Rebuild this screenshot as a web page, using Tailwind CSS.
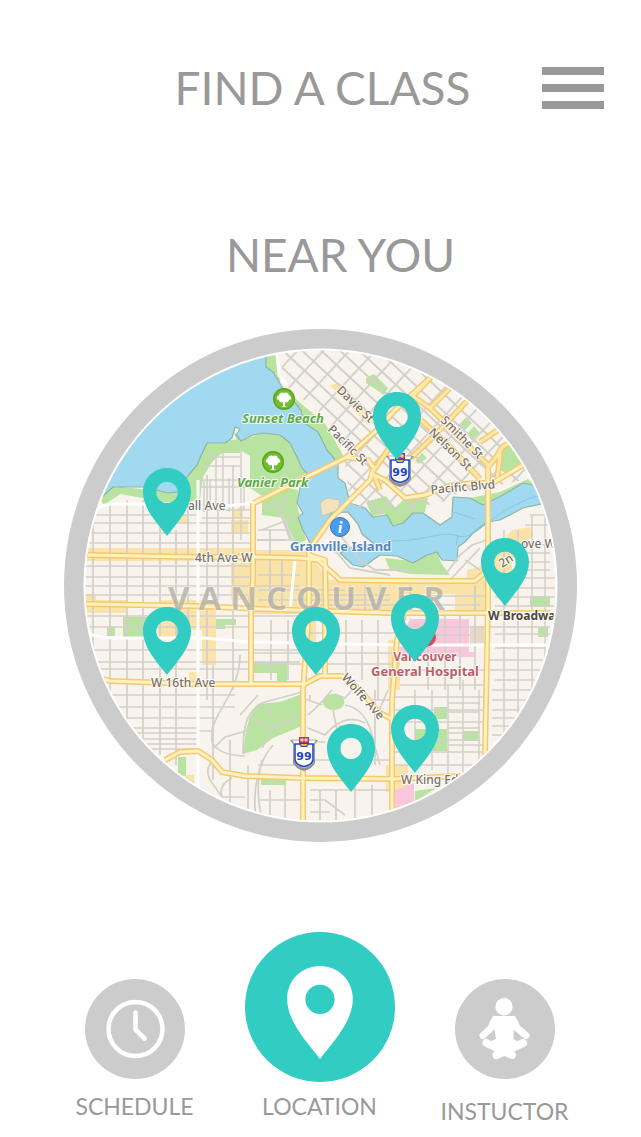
<!DOCTYPE html>
<html lang="en">
<head>
<meta charset="utf-8">
<meta name="viewport" content="width=device-width, initial-scale=1">
<title>Find a class</title>
<script src="https://cdn.jsdelivr.net/npm/@tailwindcss/browser@4"></script>
</head>
<body class="min-h-screen bg-white font-['Lato',sans-serif] text-[#999999]">
<header class="grid grid-cols-[1fr_auto_1fr] items-center pt-[60px] pr-[37px] pl-[41px]">
  <h1 class="col-start-2 text-[46px] leading-14">FIND A CLASS</h1>
  <button type="button" aria-label="Menu" class="flex cursor-pointer flex-col gap-[9px] justify-self-end">
    <span class="block h-[8px] w-[62px] bg-[#999999]"></span>
    <span class="block h-[8px] w-[62px] bg-[#999999]"></span>
    <span class="block h-[8px] w-[62px] bg-[#999999]"></span>
  </button>
</header>

<main>
  <h2 class="pt-[111px] pl-10 text-center text-[46px] leading-14">NEAR YOU</h2>

  <section aria-label="Classes near you" class="px-16 pt-[46px]">
    <svg viewBox="64 329 513 513" class="block w-full">
      <defs>
        <clipPath id="disc"><circle cx="320.5" cy="585.5" r="235"/></clipPath>
        <clipPath id="downtown"><path d="M278 340L284 384L304 400L328 418L344 455L350 503L372 513L395 515L420 507L450 500L452 495L523 480L560 470V340Z"/></clipPath>
        <pattern id="blocks" width="19" height="13" patternUnits="userSpaceOnUse" patternTransform="rotate(43 380 400)">
          <path d="M0 1H19M1 0V13" stroke="#d3cfc9" stroke-width="1.800" fill="none"/>
        </pattern>
        <path id="roads" d="M80 555L195 557H255L300 558L318 560L340 580L420 581H475L488 570M80 604L195 606L260 609L390 613H550M253 503V580L251 600V685M254 503L347 457L377 430L395 410L430 378M303 820V690L309 610V550L330 520L370 480L374 468L368 460L345 457M309 545V555L325 560L326 610M325 610V676M100 678L110 681L200 684H305L320 676H342L360 690L378 712L392 719M165 760L180 752L198 751L212 760L222 772L245 776L300 778L395 779L460 776M392 820V700L397 640L404 615M485 755L488 600V470M370 473L385 480L405 498L425 495L452 485L477 483H493L523 465"/>
        <path id="downtown-roads" d="M374 470L395 440L411 426M480 479L453 450L421 420M410 399L448 360M411 395L430 408L490 467M430 408L450 388M411 458L436 434L468 400M480 442L498 430M488 480V467L497 456L500 450Q506 442 518 442M497 478Q500 462 500 450M372 470L380 490"/>
        <symbol id="pin" viewBox="0 0 48 68">
          <path fill="currentColor" fill-rule="evenodd" d="M24 0C37.500 0 48 10.500 48 24C48 41 33 56 24 68C15 56 0 41 0 24C0 10.500 10.500 0 24 0ZM24 13.700A10.700 10.700 0 1 0 24 35.100A10.700 10.700 0 1 0 24 13.700Z"/>
        </symbol>
        <symbol id="tree" viewBox="0 0 24 24">
          <circle cx="12" cy="12" r="11" fill="#58a618"/>
          <circle cx="12" cy="12" r="9.500" fill="#72bd2c"/>
          <path fill="#fff" d="M11 19V15C9 16 7 15 7 13C4 13 4 9 7 8.500C7 6 10 4.500 12 6C14 4.500 17 6 17 8.500C20 9 20 13 17 13C17 15 15 16 13 15V19L15 20H9Z"/>
        </symbol>
        <symbol id="shield" viewBox="0 0 30 36">
          <path d="M1 4H29L26 8V27Q24 32 15 35Q6 32 4 27V8Z" fill="#8f8f8f"/>
          <path d="M3 4H27L25 8V24Q24 30 15 32Q6 30 5 24V8Z" fill="#fff" stroke="#aaa" stroke-width="1"/>
          <path d="M6 8H24V24Q23 29 15 30.500Q7 29 6 24Z" fill="#fff" stroke="#2449bd" stroke-width="1.600"/>
          <path d="M10 1H20V8L18 11H12L10 8Z" fill="#2449bd"/>
          <path d="M10.500 1.500H19.500V6.500H10.500Z" fill="#e9404a"/>
          <path d="M11 8H19L17 10H13Z" fill="#f7b429"/>
          <path d="M13 2V6M17 2V6M11 4H19" stroke="#fff" stroke-width="0.800"/>
          <text x="15" y="24" text-anchor="middle" class="font-['DejaVu_Sans'] text-[11px] font-bold" fill="#2449bd">99</text>
        </symbol>
      </defs>

      <circle cx="320.500" cy="585.500" r="256.500" fill="#cccccc"/>
      <circle cx="320.500" cy="585.500" r="237" fill="#ffffff"/>

      <g clip-path="url(#disc)">
        <rect x="64" y="329" width="513" height="513" fill="#f8f4ed"/>

        <!-- commercial and hospital areas -->
        <g fill="#fae3a8">
          <path d="M80 548H255V561H80ZM80 594H96V600H126V613H80ZM161 600H216V630H180V638H158V614ZM202 612H216V665H202ZM182 515H187V524H176ZM252 550H305L330 580H467V570L487 565V560L512 530L530 527L533 535L512 560V578H487V615H455V593H400V612L300 614H252V600H231V563H252ZM231 520H248V533H231ZM232 512L243 505V518H232ZM386 765H408V792H386ZM388 640H400V690H388ZM189 672H200V688H189ZM185 775H194V786H185ZM330 385L340 383L378 420L368 425ZM303 620H316V660H303Z"/>
        </g>
        <path d="M330 582H455V594H330Z" fill="#fae3a8"/>
        <path d="M410 619H469V652H474V657H400V640ZM395 790L414 783V820H395Z" fill="#f9c6dc"/>
        <path d="M470 626H484V645H470Z" fill="#e7dac5"/>

        <!-- parks -->
        <g fill="#b9e3a1">
          <path d="M100 499L113 486L168 492L180 490L207 443L240 439V453H222L212 462L203 477L200 499L181 505L120 494L104 505Z"/>
          <path d="M232 427L240 441L263 433L280 435L290 443L307 473L262 496L250 488V456L240 450Z"/>
          <path d="M262 495L283 487L298 490L297 505L306 540L296 545L284 518L262 515Z"/>
          <path d="M266 352H275L281 386L304 406L326 425L343 455L338 464L303 422L282 388L266 368Z"/>
          <path d="M366 378L374 374L388 388L384 395L366 383ZM459 425L466 417L472 423L465 430ZM468 433L474 426L480 433L471 440ZM415 461L422 453L427 458L419 464Z"/>
          <path d="M366 502L386 496L395 508L403 500L428 498L425 512L403 524L391 525L385 514L372 516Z"/>
          <path d="M470 498L500 492L528 479L540 490L480 508Z"/>
          <path d="M385 558L413 561L437 551L441 563L450 575L410 574L390 570ZM404 544H412V557H404Z"/>
          <path d="M123 617H156V638H123ZM107 627H115V636H107ZM216 619H236V625H225V629H216ZM530 596H550V607H530ZM538 627H548V637H538ZM253 662H287V682H277V673H253ZM261 779H286V785H261ZM178 757H186V776H178ZM434 707H447V719H434ZM415 729H447V751H415ZM463 731H479V741H463ZM415 791L436 788L415 802Z"/>
          <path d="M302 694L280 702L258 704L250 716L246 730L243 754L257 750L273 738L302 726Z"/>
          <ellipse cx="333.500" cy="702" rx="11" ry="8"/>
        </g>

        <!-- water -->
        <path fill="#a1d9f1" stroke="#8db5a5" stroke-width="1.200" stroke-linejoin="round" d="M60 520L102 497L113 487H143L156 490L168 493L178 492L187 477L197 465L200 458L207 443H225L232 438L235 427L240 429L236 435L241 441L253 435L263 433L280 435L290 443L297 457L302 468L307 473L300 488L297 503L303 513L298 517L303 530L310 543L316 539L324 524L332 513L348 512L358 524L362 534L374 544L364 545L350 548L340 553L353 565L363 567L380 555L397 556L413 563L427 555L437 552L442 560L457 561L458 547L465 542L473 533L487 522L500 520L523 508L560 500V480L533 485L523 483L503 495L483 505L470 498L453 497L452 517L440 525L433 520L423 513H413L403 523L393 526L387 515L373 517L365 508L350 503L345 483L338 478V463L327 450L318 432L303 422L301 410L282 387L273 372L266 367V330H60Z"/>
        <path d="M320 503L327 498L340 500L338 510L322 516Z" fill="#f3e3bd" stroke="#c4c6b4"/>
        <path d="M390 541C430 541 440 530 458 536S490 510 540 495M458 536L456 545M454 512L475 519" fill="none" stroke="#86c6e8" stroke-width="1"/>

        <!-- downtown blocks -->
        <path clip-path="url(#downtown)" d="M270 340H560V520H270Z" fill="url(#blocks)"/>
        <ellipse cx="511" cy="459" rx="12" ry="15" transform="rotate(30 511 459)" fill="#b9e3a1"/>

        <!-- minor streets -->
        <g fill="none" stroke="#d3cfc9" stroke-width="1.700">
          <path d="M93 510V680M110 505V720M127 500V730M143 500V745M160 500V755M176 530V765M188 500V640M207 475V700M218 510V600M233 465V690M213 665V780"/>
          <path d="M80 515H198M80 523H250M80 533H250M80 543H250M80 566H250M80 577H250M80 586H300M80 595H250M80 616H305M80 627H250M80 650H300M80 662H300M90 669H250M95 695H235M100 707H235M105 718H215M125 728H198M130 733H198M135 739H198M140 744H198M145 749H198"/>
          <path d="M200 466H240M205 457H240M198 480H250M196 487H248M202 510H250M202 518H250M204 480V512M210 480V505M216 455V505M223 452V505M229 478V512M241 450V540M244 480V510" stroke-width="1.500"/>
          <path d="M258 530H290M258 540H295M258 575H300M258 590H345M258 600H390M270 530V610M282 560V610M271 620V680M288 620V680M346 620V682M362 620V680M378 620V700M252 633H400M252 653H400M252 664H400"/>
          <path d="M310 595H390M320 605H480M350 585V612M365 585V612M380 585V612M410 585V615M428 615V690M445 610V690M460 615V690M475 585V690M400 596H485M400 627H485M400 635H470M490 627H550M490 660H550M490 670H550M400 670H485M400 685H485"/>
          <path d="M504 530V740M518 530V725M532 515V700M545 515V680M530 515H550M525 525H550M522 545H550M520 553H550M515 562H550M515 570H550M495 578H555M495 588H555M495 597H555M495 606H555M495 634H550M495 648H545M495 680H535M492 690H535M492 700H530M492 710H525M492 718H515M492 726H510M492 735H505" stroke-width="1.500"/>
          <path d="M415 690V765M432 690V770M448 685V790M463 680V775M479 690V765M395 697H487M395 710H487M448 703H480M448 712H480M395 722H485M448 728H480M415 740H480M395 752H487M448 745H485M395 765H487M448 733H480" stroke-width="1.500"/>
          <path d="M240 655C240 690 215 712 212 730L212 742Q218 755 245 756M214 748L225 737L250 730M211 763Q205 770 210 780L222 797H245M222 797Q218 785 232 778M198 731H212M230 740V820M248 765V820M262 760C256 785 258 800 262 820M273 745C258 762 252 790 256 820"/>
          <path d="M308 715Q320 705 332 690M322 705L300 697M345 705Q365 708 372 735T380 765M333 710L337 730M308 728L325 735Q345 712 365 723M310 742H325M310 760H390M340 725V760M258 765H300M320 790V820M336 790V820M355 785V820M372 785V815M310 800H325L345 815M310 812H330M270 790V815M285 785V820M310 790H390M258 800H300M352 690L345 698L335 694M375 690V765M388 690L375 720M360 700H390M258 695L240 715M310 695V700"/>
          <path d="M243 754C243 730 245 712 262 703T302 692M250 718L272 728L302 716M263 705L275 718M262 748L275 725M268 510L275 502L283 520L290 540M262 530L300 515M257 540H285M285 495L282 515L292 540M340 535L360 560L375 570H410M330 545L350 568L390 575M445 575L460 555L472 545L487 540M450 580L480 548M465 560L480 570" stroke-width="1.800"/>
        </g>
        <!-- light secondary roads -->
        <path fill="none" stroke="#ffffff" stroke-width="3" d="M198 480V790M88 520Q95 504 115 504H188M80 630Q95 638 115 638H205L250 642L395 645H550M225 506L255 503M290 610L295 560M276 345L279 375L287 385"/>
        <!-- arterial roads: casing, then centre -->
        <g fill="none" stroke-linejoin="round">
          <use href="#roads" stroke="#f5c873" stroke-width="6"/>
          <use href="#downtown-roads" stroke="#f5c873" stroke-width="6"/>
          <use href="#roads" stroke="#fff2bd" stroke-width="3"/>
          <use href="#downtown-roads" stroke="#fde9a6" stroke-width="3"/>
        </g>

        <!-- place labels -->
        <text y="610" x="168" class="font-['Open_Sans'] text-[33px] font-bold tracking-[9px]" fill="#b0ada3" fill-opacity="0.75" stroke="#ffffff" stroke-opacity="0.4" stroke-width="2" paint-order="stroke">VANCOUVER</text>
        <g class="font-['Noto_Sans'] text-[12px] font-medium" fill="#77716a" stroke="#ffffff" stroke-width="2" stroke-opacity="0.850" paint-order="stroke" stroke-linejoin="round">
          <text x="188" y="510">all Ave</text>
          <text x="195" y="562">4th Ave W</text>
          <text x="151" y="687">W 16th Ave</text>
          <text x="401" y="784">W King Edw</text>
          <text transform="translate(336 391) rotate(44)">Davie St</text>
          <text transform="translate(327 430) rotate(45)">Pacific St</text>
          <text transform="translate(440 421) rotate(45)">Smithe St</text>
          <text transform="translate(428 433) rotate(44)">Nelson St</text>
          <text transform="translate(431 494) rotate(-5)">Pacific Blvd</text>
          <text transform="translate(341 678) rotate(48)">Wolfe Ave</text>
          <text transform="translate(502 568) rotate(-32)">2n</text>
          <text x="521" y="548">ove W</text>
          <text x="488" y="620" class="font-bold" fill="#4c4842">W Broadway</text>
          <g class="font-bold">
            <g fill="#5fa947" class="text-[13px] italic">
              <text x="242" y="423">Sunset Beach</text>
              <text x="237" y="487">Vanier Park</text>
            </g>
            <text x="290" y="551" class="text-[13px]" fill="#5585bd">Granville Island</text>
            <g fill="#bd5e65" text-anchor="middle">
              <text x="425" y="661">Vancouver</text>
              <text x="425" y="676" class="text-[13px]">General Hospital</text>
            </g>
          </g>
        </g>
        <use href="#tree" x="272" y="387" width="24" height="24"/>
        <use href="#tree" x="261" y="450" width="24" height="24"/>
        <circle cx="340" cy="527" r="9.500" fill="#4a9cf0" stroke="#3476b8"/>
        <text x="340" y="533" text-anchor="middle" class="font-['Liberation_Serif'] text-[17px] font-bold italic" fill="#ffffff">i</text>
        <circle cx="426" cy="637" r="10" fill="#d94b53"/>
        <use href="#shield" x="385" y="452" width="30" height="36"/>
        <use href="#shield" x="289" y="736" width="30" height="36"/>
      </g>

      <g class="text-[#31ccc2]">
        <a href="#class-1" aria-label="Class 1"><use href="#pin" x="373" y="392" width="48" height="68"/></a>
        <a href="#class-2" aria-label="Class 2"><use href="#pin" x="143" y="468" width="48" height="68"/></a>
        <a href="#class-3" aria-label="Class 3"><use href="#pin" x="481" y="538" width="48" height="68"/></a>
        <a href="#class-4" aria-label="Class 4"><use href="#pin" x="391" y="594" width="48" height="68"/></a>
        <a href="#class-5" aria-label="Class 5"><use href="#pin" x="292" y="607" width="48" height="68"/></a>
        <a href="#class-6" aria-label="Class 6"><use href="#pin" x="143" y="607" width="48" height="68"/></a>
        <a href="#class-7" aria-label="Class 7"><use href="#pin" x="327" y="724" width="48" height="68"/></a>
        <a href="#class-8" aria-label="Class 8"><use href="#pin" x="391" y="705" width="48" height="68"/></a>
      </g>
    </svg>
  </section>
</main>

<nav class="grid grid-cols-3 items-end pt-[90px] pr-11 pl-[42px] text-[23px] leading-7">
  <a href="#schedule" class="flex flex-col items-center gap-[13px] pb-[5px]">
    <svg viewBox="0 0 100 100" class="size-[100px]">
      <circle cx="50" cy="50" r="50" fill="#cccccc"/>
      <g fill="none" stroke="#ffffff" stroke-width="4.600" stroke-linecap="round" stroke-linejoin="round">
        <circle cx="50.500" cy="50" r="27"/>
        <path d="M50.500 33.500V50.500L59.500 59.500"/>
      </g>
    </svg>
    <span>SCHEDULE</span>
  </a>
  <a href="#location" aria-current="page" class="flex flex-col items-center gap-[10px] pb-[5px]">
    <svg viewBox="0 0 150 150" class="size-[150px]">
      <circle cx="75" cy="75" r="75" fill="#31ccc2"/>
      <use href="#pin" x="42" y="34" width="66" height="93" class="text-white"/>
    </svg>
    <span>LOCATION</span>
  </a>
  <a href="#instructor" class="flex flex-col items-center gap-[18px]">
    <svg viewBox="0 0 100 100" class="size-[100px]">
      <circle cx="50" cy="50" r="50" fill="#cccccc"/>
      <g fill="#ffffff" stroke="#ffffff" stroke-linecap="round" stroke-linejoin="round">
        <circle cx="49" cy="27.700" r="8.700" stroke="none"/>
        <path stroke="none" d="M39 37H59L64 44L58.500 51V60L64 63L58 72L50 74L40 72L34 63L41 60L39.500 51L34 44Z"/>
        <path fill="none" stroke-width="7" d="M40 40.500L36 49L28 56.500M58 40.500L62 49L71 56.500"/>
        <path fill="none" stroke-width="8" d="M31.500 64L57 76M68 64L41.500 76"/>
      </g>
    </svg>
    <span>INSTUCTOR</span>
  </a>
</nav>
</body>
</html>
